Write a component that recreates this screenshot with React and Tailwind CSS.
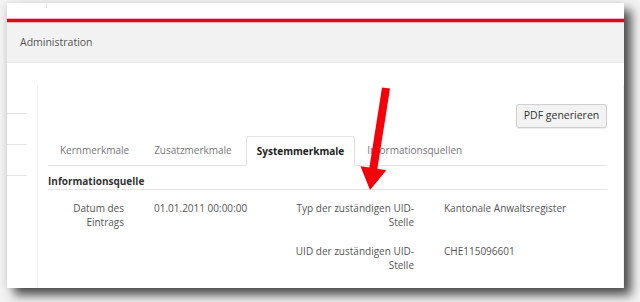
import React from 'react'

const rows = [
  {
    label: ['Datum des', 'Eintrags'],
    value: '01.01.2011 00:00:00',
    label2: ['Typ der zuständigen UID-', 'Stelle'],
    value2: 'Kantonale Anwaltsregister',
  },
  {
    label: [],
    value: '',
    label2: ['UID der zuständigen UID-', 'Stelle'],
    value2: 'CHE115096601',
  },
]

const tabs = ['Kernmerkmale', 'Zusatzmerkmale', 'Systemmerkmale', 'Informationsquellen']

function Lines({ parts }) {
  return parts.map((p, i) => (
    <React.Fragment key={i}>
      {p}
      {i < parts.length - 1 && <br />}
    </React.Fragment>
  ))
}

export default function App() {
  return (
    <div className="relative w-[640px] h-[302px] overflow-hidden bg-[#f3f3f3] pt-[3px] pl-[7px] font-['Open_Sans',sans-serif]">
      <div className="w-[617px] h-[285px] bg-white flex flex-col shadow-[7px_7px_10px_rgba(0,0,0,0.7),-3px_0_6px_rgba(0,0,0,0.06)]">
        {/* header strip */}
        <div className="h-[15px] pl-[39px]">
          <div className="w-px h-[5px] bg-[#e8e8e8]" />
        </div>
        <div className="h-[5px] bg-[#e30613] border-y border-[#f4b3b9]" />
        <div className="h-[40px] bg-[#f2f2f2] border-b border-[#e6e6e6] flex items-center pl-[13px] text-[10.5px] text-[#555]">
          Administration
        </div>

        <div className="flex flex-1">
          {/* sidebar */}
          <div className="w-[30px] pt-[50px] flex flex-col gap-[30px]">
            <div className="h-px w-[20px] bg-[#e2e2e2]" />
            <div className="h-px w-[20px] bg-[#e2e2e2]" />
            <div className="h-px w-[20px] bg-[#e2e2e2]" />
          </div>

          {/* content panel */}
          <div className="flex-1 mt-[22px] border-l border-r border-[#f1f1f1] pl-[10px] pr-[16px] pt-[19px]">
            <div className="flex justify-end">
              <button className="h-[24px] w-[91px] bg-[#f2f2f2] border border-[#cfcfcf] rounded-[3px] text-[10.5px] text-[#333] shadow-[0_1px_1px_rgba(0,0,0,0.08)]">
                PDF generieren
              </button>
            </div>

            <div className="mt-[8px] flex h-[30px] border-b border-[#e2e2e2] text-[10px]">
              {tabs.map((t, i) =>
                i === 2 ? (
                  <div
                    key={t}
                    className="-mb-px ml-[2px] px-[10px] flex items-center bg-white border border-b-white border-[#e2e2e2] rounded-t-[3px] font-bold text-[#222]"
                  >
                    {t}
                  </div>
                ) : (
                  <div key={t} className={`${i === 1 ? 'pl-[13px]' : 'pl-[12px]'} pr-[12px] flex items-center text-[#777]`}>
                    {t}
                  </div>
                )
              )}
            </div>

            <div className="pt-[8px] pb-[1px] border-b border-[#e4e4e4] text-[10px] font-bold text-[#333] leading-[14px]">
              Informationsquelle
            </div>

            <div className="pt-[11px] flex flex-col gap-[15px] text-[10px] leading-[14px] text-[#555]">
              {rows.map((r, i) => (
                <div key={i} className="grid grid-cols-[76px_106px_124px_1fr] gap-x-[30px]">
                  <div className="text-right">
                    <Lines parts={r.label} />
                  </div>
                  <div>{r.value}</div>
                  <div className="text-right">
                    <Lines parts={r.label2} />
                  </div>
                  <div>{r.value2}</div>
                </div>
              ))}
            </div>
          </div>
        </div>
      </div>

      {/* red annotation arrow */}
      <svg className="absolute inset-0 pointer-events-none" width="640" height="302" viewBox="0 0 640 302">
        <polygon
          points="382,87.4 390,88.6 377.4,168.8 386.3,170.2 370,190 360.5,166.2 369.4,167.6"
          fill="#f5000a"
        />
      </svg>
    </div>
  )
}
